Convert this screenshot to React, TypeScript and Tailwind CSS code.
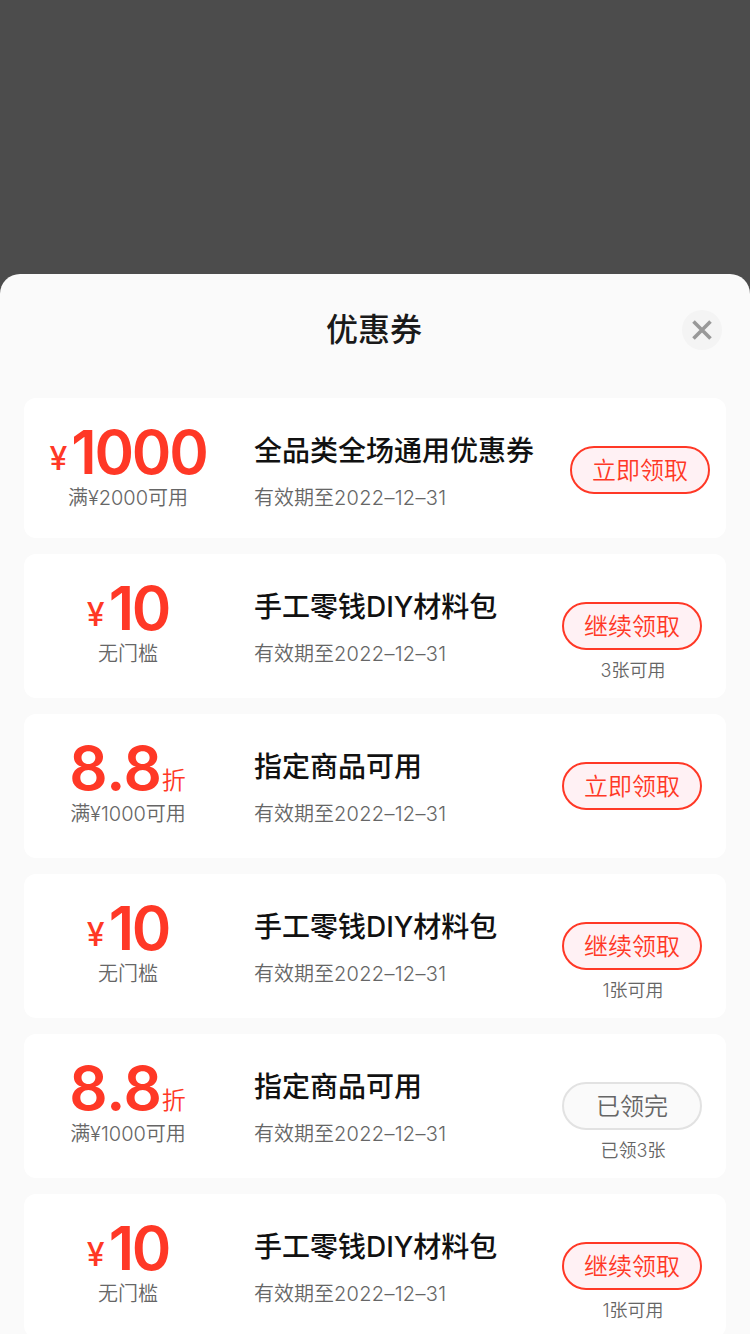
import clsx from 'clsx'

type CouponStatus = 'claim' | 'continue' | 'done'

interface Coupon {
  id: number
  amount: string
  kind: 'cash' | 'discount'
  condition: string
  title: string
  status: CouponStatus
  note?: string
}

const EXPIRES = '2022–12–31'

const coupons: Coupon[] = [
  { id: 1, amount: '1000', kind: 'cash', condition: '满¥2000可用', title: '全品类全场通用优惠券', status: 'claim' },
  { id: 2, amount: '10', kind: 'cash', condition: '无门槛', title: '手工零钱DIY材料包', status: 'continue', note: '3张可用' },
  { id: 3, amount: '8.8', kind: 'discount', condition: '满¥1000可用', title: '指定商品可用', status: 'claim' },
  { id: 4, amount: '10', kind: 'cash', condition: '无门槛', title: '手工零钱DIY材料包', status: 'continue', note: '1张可用' },
  { id: 5, amount: '8.8', kind: 'discount', condition: '满¥1000可用', title: '指定商品可用', status: 'done', note: '已领3张' },
  { id: 6, amount: '10', kind: 'cash', condition: '无门槛', title: '手工零钱DIY材料包', status: 'continue', note: '1张可用' },
]

const statusText: Record<CouponStatus, string> = {
  claim: '立即领取',
  continue: '继续领取',
  done: '已领完',
}

function Amount({ amount, kind }: Pick<Coupon, 'amount' | 'kind'>) {
  return (
    <div className="flex h-[60px] items-baseline justify-center whitespace-nowrap text-[#ff3826]">
      {kind === 'cash' && <span className="mr-1 text-[32px] leading-[52px] font-medium -translate-y-1">¥</span>}
      <span
        className={clsx(
          'text-[60px] leading-[60px] font-[560]',
          kind === 'cash' ? 'tracking-[-2.2px]' : 'tracking-[-0.2px]',
        )}
      >
        {amount}
      </span>
      {kind === 'discount' && (
        <span className="ml-px text-2xl leading-[52px] font-[350] -translate-x-px -translate-y-px">折</span>
      )}
    </div>
  )
}

function CouponCard({ coupon, first }: { coupon: Coupon; first: boolean }) {
  return (
    <li className={clsx('flex shrink-0 rounded-xl bg-white', first ? 'h-[140px] pr-4' : 'h-36 pr-6')}>
      <div className="w-52 pt-6 text-center">
        <Amount amount={coupon.amount} kind={coupon.kind} />
        <p className="mt-px text-xl leading-[30px] font-[350] whitespace-nowrap text-[#666]">{coupon.condition}</p>
      </div>
      <div className="ml-[22px] flex-1 pt-[33px]">
        <h2 className="text-[28px] leading-10 font-medium whitespace-nowrap text-[#111]">{coupon.title}</h2>
        <p className="mt-3 text-xl leading-[30px] font-[350] whitespace-nowrap text-[#666]">
          有效期至<span className="tracking-[0.3px]">{EXPIRES}</span>
        </p>
      </div>
      <div className="flex w-[140px] flex-col items-center pt-12">
        <button
          className={clsx(
            'h-12 w-[140px] shrink-0 rounded-full border-2 pt-0.5 text-2xl leading-[42px] font-[350]',
            coupon.status === 'done'
              ? 'border-[#e2e2e2] bg-[#fafafa] text-[#666]'
              : 'border-[#ff3826] bg-[#fff1f4] text-[#ff3826]',
          )}
        >
          {statusText[coupon.status]}
        </button>
        {coupon.note && (
          <p className="mt-[7px] ml-0.5 text-lg leading-7 font-[350] whitespace-nowrap text-[#666]">{coupon.note}</p>
        )}
      </div>
    </li>
  )
}

export default function App() {
  return (
    <div className="h-[1334px] w-[750px] overflow-hidden bg-[#4c4c4c] pt-[274px] font-[Inter,'Noto_Sans_CJK_SC',sans-serif]">
      <section className="h-[1060px] overflow-hidden rounded-t-[20px] bg-[#fafafa]">
        <header className="flex h-[124px] items-start justify-between px-7 pt-9">
          <span className="size-10" />
          <h1 className="mr-0.5 text-[32px] leading-10 font-medium text-[#1a1a1a]">优惠券</h1>
          <button aria-label="关闭" className="flex size-10 items-center justify-center rounded-full bg-[#f4f4f4]">
            <svg className="size-5" viewBox="0 0 20 20" fill="none" stroke="#999" strokeWidth="3.6">
              <path d="M1.5 1.5l17 17M18.5 1.5l-17 17" />
            </svg>
          </button>
        </header>
        <ul className="flex flex-col gap-4 px-6">
          {coupons.map((coupon, i) => (
            <CouponCard key={coupon.id} coupon={coupon} first={i === 0} />
          ))}
        </ul>
      </section>
    </div>
  )
}
